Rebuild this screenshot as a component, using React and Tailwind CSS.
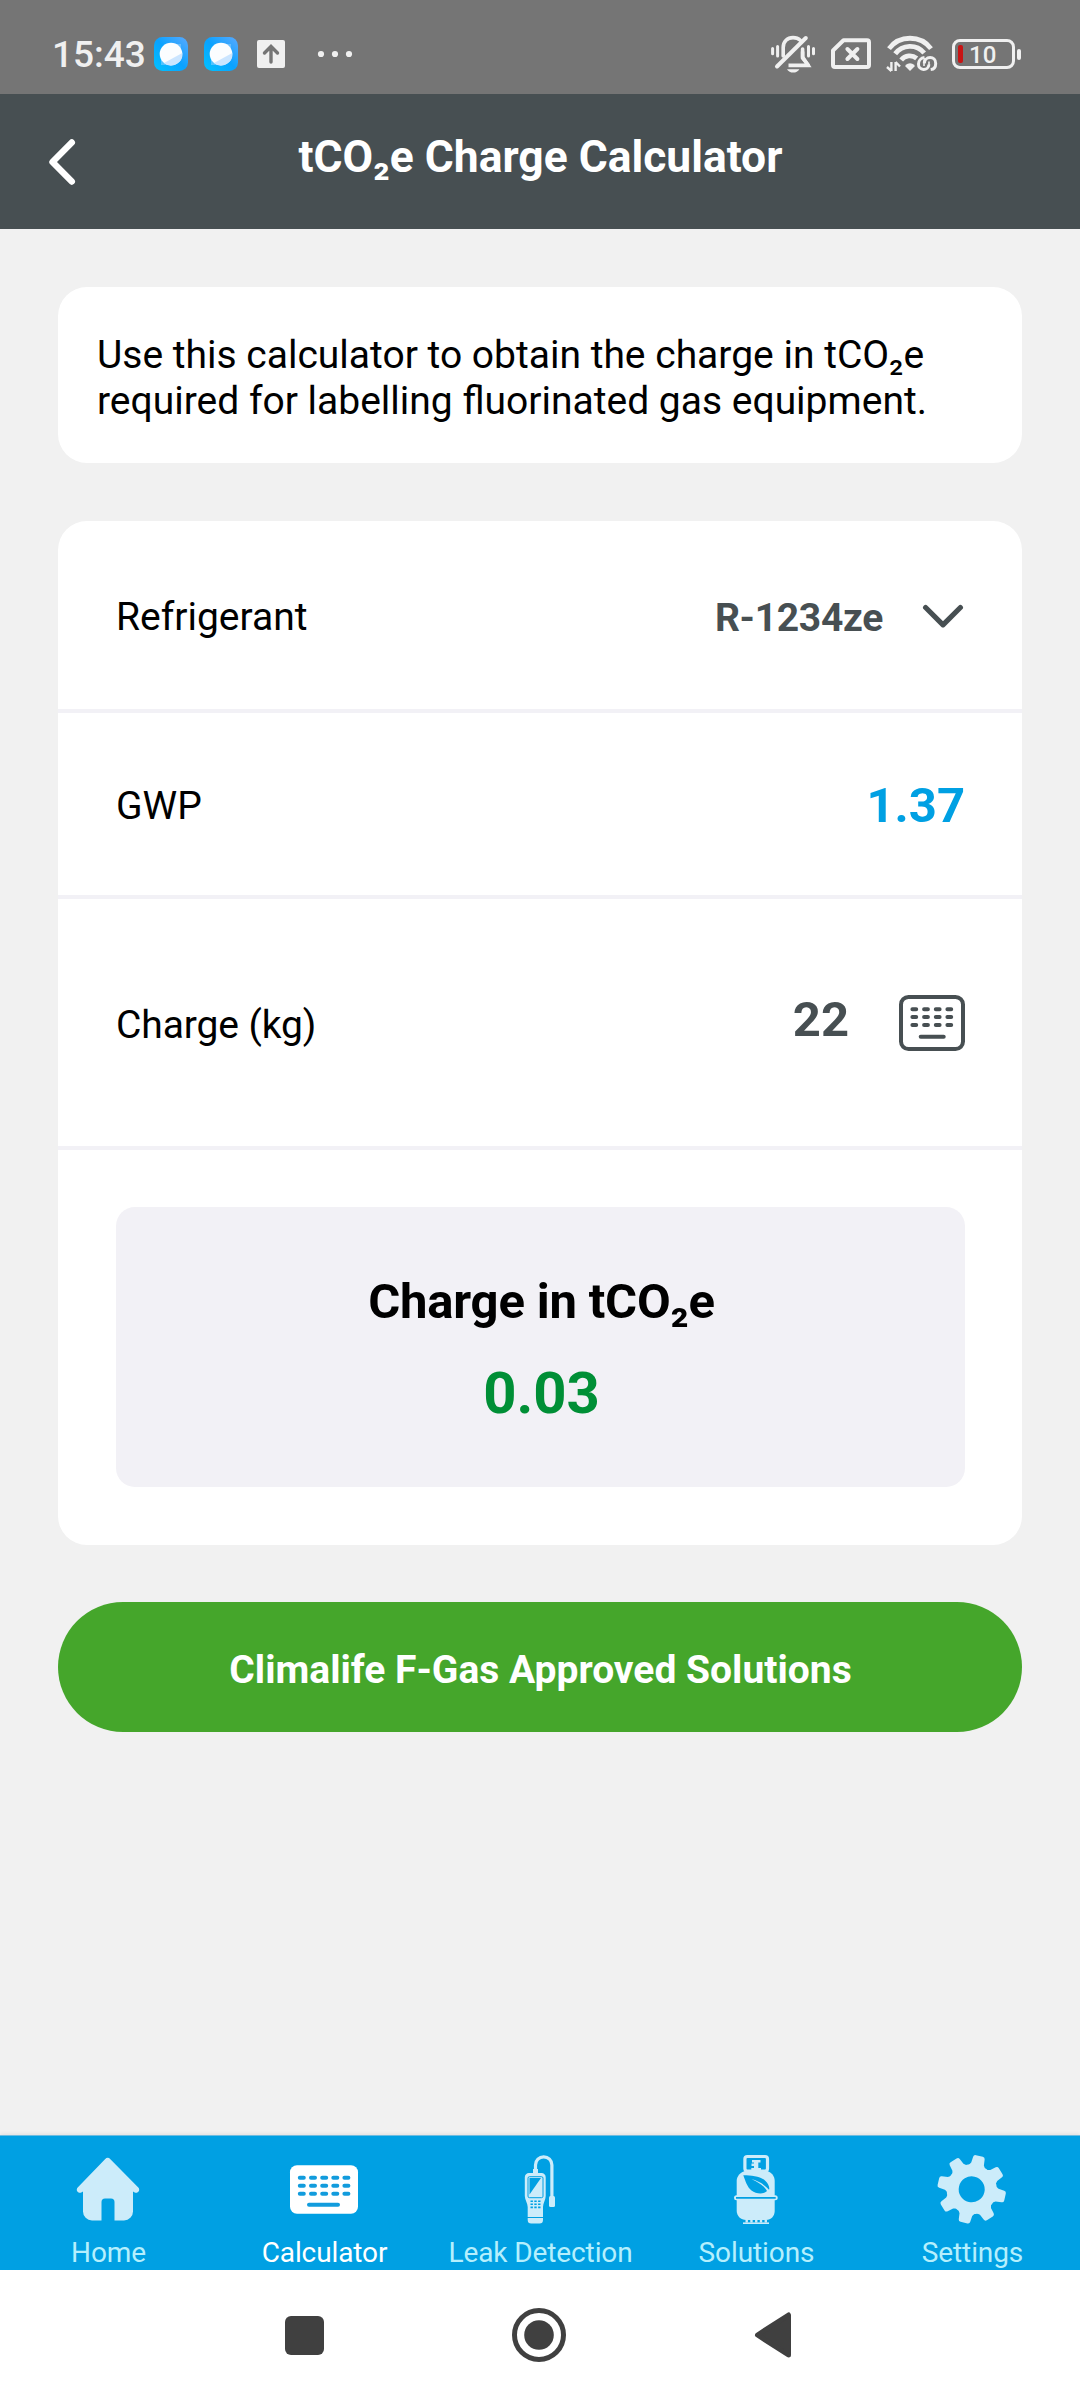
const keyRows = [23.7, 31.8, 39.7];

function CloudAppIcon({ id }) {
  return (
    <svg width="34" height="34" viewBox="0 0 34 34">
      <defs>
        <linearGradient id={id} x1="0" y1="1" x2="1" y2="0">
          <stop offset="0" stopColor="#00c3ff" />
          <stop offset="0.5" stopColor="#0aa2ff" />
          <stop offset="1" stopColor="#5aa9ff" />
        </linearGradient>
      </defs>
      <rect width="34" height="34" rx="8.5" fill={`url(#${id})`} />
      <path d="M27 7v9L17 28H7v-9L17 7z" fill="#8fd0ff" opacity="0.55" />
      <circle cx="17" cy="17" r="11.3" fill="#fbfdff" />
      <path d="M28.3 16A11.3 11.3 0 0 1 10 26z" fill="#cbe5ff" />
    </svg>
  );
}

function StatusBar() {
  return (
    <div className="h-[94px] bg-[#757575] pl-[52px] pr-[59px] pt-[14px] flex items-center justify-between text-[#f0f0f0]">
      <div className="flex items-center">
        <span className="w-[102px] pt-[2px] text-[37px] leading-[44px] font-medium">15:43</span>
        <CloudAppIcon id="appA" />
        <span className="w-4" />
        <CloudAppIcon id="appB" />
        <svg className="ml-[19px]" width="28" height="28" viewBox="0 0 28 28">
          <rect width="28" height="28" rx="2" fill="#f0f0f0" />
          <path d="M14 22V6.5M7.5 13L14 6.5l6.5 6.5" fill="none" stroke="#757575" strokeWidth="3.4" strokeLinecap="round" />
        </svg>
        <svg className="ml-[32px]" width="36" height="8" viewBox="0 0 36 8" fill="#f0f0f0">
          <circle cx="4" cy="4" r="3.1" />
          <circle cx="18" cy="4" r="3.1" />
          <circle cx="32" cy="4" r="3.1" />
        </svg>
      </div>

      <div className="flex items-center">
        {/* Muted bell */}
        <svg width="46" height="40" viewBox="0 0 46 40" fill="none" stroke="#f0f0f0" strokeWidth="3.6" strokeLinecap="round">
          <path d="M13.2 22V13.5C13.2 7.5 17.5 3.6 23 3.6c3 0 5.6 1 7.3 2.6" />
          <path d="M7 32.5L35.8 4" strokeWidth="4" />
          <path d="M32.6 17.5v5.5l5.6 8.4H18.5" strokeLinecap="butt" />
          <path d="M32.6 15v9l5.6 7" />
          <path d="M17 35.2h12.4c-1.4 2.2-3.6 3.4-6.2 3.4s-4.8-1.2-6.2-3.4z" fill="#f0f0f0" stroke="none" />
          <path d="M2.6 14.4v5.4M7.6 12.4v9.6M38.5 12.4v9.6M43.5 14.4v5.4" strokeWidth="3" />
        </svg>
        {/* No SIM */}
        <svg className="ml-[15px]" width="40" height="32" viewBox="0 0 40 32" fill="none" stroke="#f0f0f0" strokeWidth="4" strokeLinejoin="round" strokeLinecap="round">
          <path d="M12.5 2.3H36a2 2 0 0 1 2 2V27a2 2 0 0 1-2 2H4a2 2 0 0 1-2-2V12.5z" />
          <path d="M16.4 11l10 10M26.4 11l-10 10" />
        </svg>
        {/* Wi-Fi */}
        <svg className="ml-[15px]" width="52" height="38" viewBox="0 0 52 38" fill="none" stroke="#f0f0f0" strokeWidth="4.8">
          <path d="M3 13.6a26.5 26.5 0 0 1 42 0" />
          <path d="M9.2 18.8a18.5 18.5 0 0 1 29-.8" />
          <path d="M15.2 25a11 11 0 0 1 15.5-1.6" />
          <path d="M19.5 30q4.500-3.500 9 0v1.500L24 36l-4.500-4.500z" fill="#f0f0f0" stroke="none" />
          <path d="M5.4 27v9M1 32l4.4 4M9.6 36v-9M14 31.5L9.6 27" strokeWidth="2.4" />
          <path d="M38.500 22.600c-3.600.4-6 3.300-6 6.400a5.200 5.200 0 0 0 10.400.5M38.300 28.400c.2-3.400 2.400-5.800 5.800-5.800 3.200 0 5.600 2.200 5.600 5.800 0 3.400-2 5.800-5 6.200" strokeWidth="3" />
          <path d="M38 31v-4.500c0-1.200.3-2.200.9-3M43 26.500v5" strokeWidth="1.600" />
        </svg>
        {/* Battery */}
        <div className="ml-[14px] w-[63px] h-[30px] rounded-[8px] border-[3px] border-[#f0f0f0] flex items-center pl-[3px]">
          <span className="w-[5px] h-[18px] rounded-[2px] bg-[#c81414]" />
          <span className="flex-1 pl-[6px] pt-px text-[24px] leading-[24px] font-medium">10</span>
        </div>
        <span className="ml-[2px] w-1 h-[11px] rounded-[2px] bg-[#f0f0f0]" />
      </div>
    </div>
  );
}

function Header() {
  return (
    <div className="h-[135px] bg-[#474f52] px-[46px] flex items-center">
      <svg width="32" height="50" viewBox="0 0 32 50" fill="none" stroke="#fff" strokeWidth="6.4" strokeLinecap="round" strokeLinejoin="round">
        <path d="M25.8 5.5L6.500 25l19.300 19.500" />
      </svg>
      <h1 className="flex-1 pb-[10px] pr-[31px] text-center text-[44.4px] leading-[52px] font-bold text-white">tCO₂e Charge Calculator</h1>
    </div>
  );
}

function KeypadIcon() {
  return (
    <svg width="66" height="56" viewBox="0 0 66 56" fill="none" stroke="#474f52" strokeWidth="4" strokeLinecap="round">
      <rect x="2" y="2" width="62" height="52" rx="7.5" />
      {[14.3, 22, 30].map((y) => (
        <path key={y} d={`M13.4 ${y}h3.8M25.1 ${y}h3.8M36.8 ${y}h3.8M48.4 ${y}h3.8`} />
      ))}
      <path d="M21.7 41.7h23" />
    </svg>
  );
}

function HomeIcon() {
  return (
    <svg width="70" height="70" viewBox="0 0 70 70" fill="#ccecfa">
      <path d="M32 5.2a3.8 3.8 0 0 1 5.4 0L65.3 33.5c2.4 2.6-.4 6.4-3.6 5.100L60 37.500V57.500a9 9 0 0 1-9 9h-9.500V48a3.500 3.500 0 0 0-3.500-3.500h-6a3.500 3.500 0 0 0-3.500 3.500v18.500H19a9 9 0 0 1-9-9v-20l-1.700 1.100C5.100 39.900 2.300 36.100 4.700 33.500z" />
    </svg>
  );
}

function CalculatorIcon() {
  return (
    <svg width="70" height="70" viewBox="0 0 70 70">
      <rect x="1" y="11.2" width="68" height="48.5" rx="7" fill="#fff" />
      <g stroke="#129cdd" strokeWidth="4" strokeLinecap="round">
        {keyRows.map((y) => (
          <path key={y} d={`M10.8 ${y}h4M22 ${y}h4M33.2 ${y}h4M44.3 ${y}h4M55.4 ${y}h4`} />
        ))}
        <path d="M20 50.7h29" />
      </g>
    </svg>
  );
}

function DetectorIcon() {
  return (
    <svg width="70" height="70" viewBox="0 0 70 70" fill="#ccecfa">
      <path d="M30.5 16V11a8.2 8.2 0 0 1 16.4 0V43" fill="none" stroke="#ccecfa" strokeWidth="3.2" />
      <path d="M28 15h5v4h-5z" />
      <rect x="44" y="42" width="6" height="11" rx="1.5" />
      <path d="M24 19h12.500a4.200 4.200 0 0 1 4.200 4.200V42c0 4-2.700 7-2.700 11v13a3.500 3.500 0 0 1-3.500 3.500h-8.300a3.500 3.500 0 0 1-3.500-3.500V53c0-4-2.900-7-2.900-11V23.200A4.200 4.200 0 0 1 24 19z" />
      <rect x="23" y="22.7" width="15" height="21" rx="1.5" fill="none" stroke="#00a0e3" strokeWidth="1" />
      <path d="M24.500 24h11.500L24.500 40.500z" fill="#00a0e3" />
      <g stroke="#00a0e3" strokeWidth="1.6">
        <path d="M25.5 47.2h2.4M29.3 47.2h2.4M33.1 47.2h2.4" />
        <path d="M25.5 50.3h2.4M29.3 50.3h2.4M33.1 50.3h2.4" />
        <path d="M25.5 53.4h2.4M29.3 53.4h2.4M33.1 53.4h2.4" />
        <path d="M22 63.5h17" strokeWidth="1" />
      </g>
    </svg>
  );
}

function CylinderIcon() {
  return (
    <svg width="70" height="70" viewBox="0 0 70 70" fill="#ccecfa">
      <rect x="23.9" y="2.5" width="22.6" height="14.5" rx="2.5" fill="none" stroke="#ccecfa" strokeWidth="3.2" />
      <path d="M31 6h8.500v2.600H37.300v5.400h2.700v2H30.300v-2h2.700v-2h-2.500v-2.400H33V8.600h-2z" />
      <path d="M25 16.700h20c5 1 8.700 5 8.700 10V57c0 5-3.700 9-8.700 9H25c-5 0-9.300-4-9.300-9V26.700c0-5 4.300-9 9.300-10z" />
      <rect x="13" y="41.3" width="43.7" height="5" rx="2.5" />
      <path d="M15 43.8h39.7" stroke="#00a0e3" strokeWidth="1.8" />
      <path d="M22.300 21.300C31 21.500 40 22.500 44.500 27c3 3 4.500 7 3.500 8.800C44 31 37 26.500 30.500 25.300 37 28 43.500 32 46 37c-3 3.500-11 3-15.500-.5C26 33 24.500 27 22.300 21.300z" fill="#00a0e3" />
      <path d="M22 69.200h26" stroke="#ccecfa" strokeWidth="1.6" />
      <path d="M24.5 67.3h21.5" stroke="#ccecfa" strokeWidth="2.6" strokeDasharray="2.4 2.37" />
    </svg>
  );
}

function GearIcon() {
  return (
    <svg width="70" height="70" viewBox="0 0 70 70">
      <g transform="translate(34.7 35.3) rotate(13)" fill="#ccecfa">
        <circle r="19" fill="none" stroke="#ccecfa" strokeWidth="12" />
        {[0, 45, 90, 135, 180, 225, 270, 315].map((deg) => (
          <path key={deg} transform={`rotate(${deg})`} d="M-9-22L-6.5-26-5.900-32a2.400 2.400 0 0 1 2.400-2.200h7a2.400 2.400 0 0 1 2.400 2.200L6.500-26 9-22z" />
        ))}
      </g>
    </svg>
  );
}

const tabs = [
  { label: "Home", Icon: HomeIcon },
  { label: "Calculator", Icon: CalculatorIcon, active: true },
  { label: "Leak Detection", Icon: DetectorIcon },
  { label: "Solutions", Icon: CylinderIcon },
  { label: "Settings", Icon: GearIcon },
];

function TabBar() {
  return (
    <nav className="h-[135px] bg-[#00a0e3] border-t border-[#6dbbe0] pt-[18px] grid grid-cols-5 shadow-[0_-1px_4px_rgba(0,0,0,0.08)]">
      {tabs.map(({ label, Icon, active }) => (
        <div key={label} className="flex flex-col items-center">
          <Icon />
          <span className={`mt-[12px] pl-px text-[28px] leading-[34px] tracking-[-0.1px] whitespace-nowrap ${active ? "text-white" : "text-[#b5effd]"}`}>
            {label}
          </span>
        </div>
      ))}
    </nav>
  );
}

function SystemNav() {
  return (
    <div className="h-[130px] bg-white pl-[285px] flex items-center gap-[188px]">
      <span className="size-[39px] rounded-[6px] bg-[#404040]" />
      <svg width="54" height="54" viewBox="0 0 54 54">
        <circle cx="27" cy="27" r="24.5" fill="none" stroke="#404040" strokeWidth="5" />
        <circle cx="27" cy="27" r="14.8" fill="#404040" />
      </svg>
      <svg width="38" height="48" viewBox="0 0 38 48">
        <path d="M3.5 24L34.5 4v40z" fill="#404040" stroke="#404040" strokeWidth="5" strokeLinejoin="round" />
      </svg>
    </div>
  );
}

export default function App() {
  return (
    <div className="w-[1080px] h-[2400px] flex flex-col bg-[#f1f1f1] text-black font-['Roboto',sans-serif]">
      <StatusBar />
      <Header />

      <main className="flex-1 px-[58px] pt-[58px]">
        <p className="h-[176px] rounded-[29px] bg-white pl-[39px] pt-[45px] text-[39px] leading-[46px]">
          Use this calculator to obtain the charge in tCO₂e
          <br />
          required for labelling fluorinated gas equipment.
        </p>

        <div className="mt-[58px] h-[1024px] rounded-[29px] bg-white text-[39px] leading-[46px]">
          <div className="h-[192px] border-b-4 border-[#f2f1f6] px-[58px] pt-1 flex items-center">
            <span className="flex-1">Refrigerant</span>
            <span className="pt-px font-bold tracking-[-0.3px] text-[#474f52]">R-1234ze</span>
            <svg className="ml-[39px]" width="42" height="26" viewBox="0 0 42 26" fill="none" stroke="#474f52" strokeWidth="5.2" strokeLinecap="round" strokeLinejoin="round">
              <path d="M3.6 3.5L21 20.8 38.400 3.500" />
            </svg>
          </div>

          <div className="h-[186px] border-b-4 border-[#f2f1f6] pl-[58px] pr-[57px] pt-[3px] flex items-center justify-between">
            <span>GWP</span>
            <span className="text-[49px] leading-[58px] font-bold text-[#00a0e3]">1.37</span>
          </div>

          <div className="h-[251px] border-b-4 border-[#f2f1f6] pl-[58px] pr-[57px] flex items-center">
            <span className="flex-1 pt-1 tracking-[-0.1px]">Charge (kg)</span>
            <span className="pb-[5px] text-[49px] leading-[58px] font-bold text-[#474f52]">22</span>
            <span className="ml-[50px]">
              <KeypadIcon />
            </span>
          </div>

          <div className="pl-[58px] pr-[57px] pt-[57px]">
            <div className="h-[280px] rounded-[19px] bg-[#f2f1f6] pl-[2px] pt-[66px] text-center font-bold">
              <div className="text-[49px] leading-[58px] tracking-[-0.2px]">Charge in tCO₂e</div>
              <div className="mt-[28px] text-[58px] leading-[68px] text-[#008f36]">0.03</div>
            </div>
          </div>
        </div>

        <button className="mt-[57px] w-full h-[130px] rounded-full bg-[#45a62b] pl-px pt-[5px] text-center text-[39px] leading-[46px] font-bold text-white">
          Climalife F-Gas Approved Solutions
        </button>
      </main>

      <TabBar />
      <SystemNav />
    </div>
  );
}
